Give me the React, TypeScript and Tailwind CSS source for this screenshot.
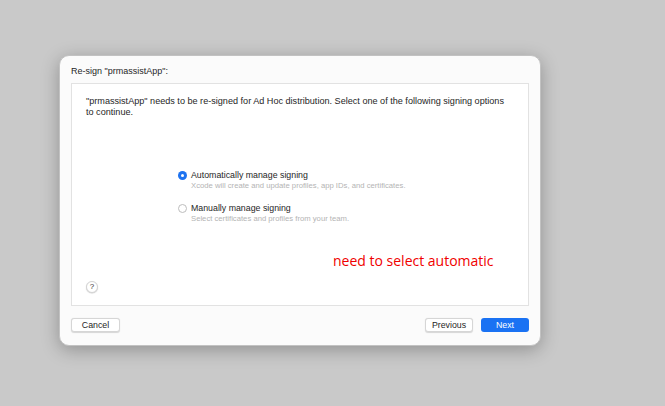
import React from "react";

export default function App() {
  return (
    <div
      className="w-[665px] h-[406px] bg-[#c9c9c9] pt-[55px] pl-[59px] overflow-hidden"
      style={{ fontFamily: '"Liberation Sans", Arial, sans-serif' }}
    >
      <div className="w-[482px] h-[291px] bg-[#fbfbfb] rounded-[10px] shadow-[0_4px_18px_rgba(0,0,0,0.28)] border border-[#c2c2c2] flex flex-col px-[11px]">
        <div className="h-[27px] flex items-end pb-[5px] text-[9px] text-[#262626]">
          Re-sign "prmassistApp":
        </div>
        <div className="h-[223px] bg-white border border-[#e2e2e2] flex flex-col px-[14px] pt-[12px] pb-[12px]">
          <p className="text-[9.1px] leading-[11px] text-[#262626]">
            "prmassistApp" needs to be re-signed for Ad Hoc distribution. Select one of the following signing options
            to continue.
          </p>
          <div className="pl-[92px] mt-[52px] flex flex-col gap-[13px]">
            <div className="flex gap-[4px]">
              <div className="w-[9px] h-[9px] rounded-full bg-[#1e73f0] flex items-center justify-center mt-[1px]">
                <div className="w-[3.5px] h-[3.5px] rounded-full bg-white" />
              </div>
              <div className="flex flex-col">
                <span className="text-[8.8px] leading-[11px] text-[#262626]">Automatically manage signing</span>
                <span className="text-[7.7px] leading-[9px] text-[#b4b4b4]">
                  Xcode will create and update profiles, app IDs, and certificates.
                </span>
              </div>
            </div>
            <div className="flex gap-[4px]">
              <div className="w-[9px] h-[9px] rounded-full bg-white border border-[#bdbdbd] mt-[1px]" />
              <div className="flex flex-col">
                <span className="text-[8.8px] leading-[11px] text-[#262626]">Manually manage signing</span>
                <span className="text-[7.7px] leading-[9px] text-[#b4b4b4]">
                  Select certificates and profiles from your team.
                </span>
              </div>
            </div>
          </div>
          <div
            className="ml-[247px] mt-[29px] text-[14px] leading-[17px] text-[#f00000]"
            style={{ fontFamily: '"Open Sans", "Noto Sans", sans-serif' }}
          >
            need to select automatic
          </div>
          <div className="mt-auto w-[12px] h-[12px] rounded-full bg-white border border-[#d4d4d4] shadow-[0_0.5px_1px_rgba(0,0,0,0.2)] flex items-center justify-center text-[8px] text-[#333]">
            ?
          </div>
        </div>
        <div className="flex items-center mt-[12px]">
          <button className="w-[49px] h-[14px] bg-white rounded-[3px] border border-[#d6d6d6] shadow-[0_0.5px_1px_rgba(0,0,0,0.15)] text-[8.8px] text-[#262626] leading-none">
            Cancel
          </button>
          <div className="flex-1" />
          <button className="w-[48px] h-[14px] bg-white rounded-[3px] border border-[#d6d6d6] shadow-[0_0.5px_1px_rgba(0,0,0,0.15)] text-[8.8px] text-[#262626] leading-none">
            Previous
          </button>
          <button className="ml-[8px] w-[48px] h-[14px] bg-[#1a72f3] rounded-[3px] text-[8.8px] text-white leading-none">
            Next
          </button>
        </div>
      </div>
    </div>
  );
}
